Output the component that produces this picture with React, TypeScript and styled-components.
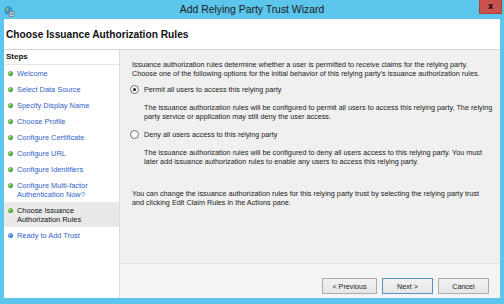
import React from "react";
import styled, { createGlobalStyle } from "styled-components";

const GlobalStyle = createGlobalStyle`
  html, body { margin: 0; padding: 0; }
  body {
    background: #5cc5ec;
    font-family: "Liberation Sans", Arial, sans-serif;
    overflow: hidden;
  }
`;

const Window = styled.div`
  width: 504px;
  height: 304px;
  display: flex;
  flex-direction: column;
  background: #5cc5ec;
`;

const TitleBar = styled.div`
  height: 19px;
  display: grid;
  grid-template-columns: 40px 1fr 40px;
  align-items: start;
`;

const AppIcon = styled.div`
  width: 11px;
  height: 11px;
  margin: 3px 0 0 4px;
`;

const TitleText = styled.div`
  text-align: center;
  font-size: 10.4px;
  line-height: 19px;
  color: #1b1b1b;
`;

const CloseButton = styled.div`
  justify-self: end;
  width: 21px;
  height: 13px;
  margin-right: 2px;
  background: #c9524e;
  border: 1px solid #a8403c;
  border-top: none;
  display: flex;
  align-items: center;
  justify-content: center;
  color: #1a0a0a;
  font-size: 8px;
  font-weight: bold;
  font-family: "DejaVu Sans", sans-serif;
`;

const Client = styled.div`
  flex: 1;
  margin: 0 4px 6px 4px;
  background: #ffffff;
  display: flex;
  flex-direction: column;
`;

const Header = styled.div`
  height: 30px;
  border-bottom: 1px solid #d6d6d6;
  display: flex;
  align-items: center;
  padding-left: 2px;
  font-weight: bold;
  font-size: 10.2px;
  color: #111;
`;

const Body = styled.div`
  flex: 1;
  display: flex;
`;

const Sidebar = styled.div`
  width: 115px;
  border-right: 1px solid #dcdcdc;
  background: #fff;
  display: flex;
  flex-direction: column;
`;

const StepsHeader = styled.div`
  height: 14px;
  border-bottom: 1px solid #e6e6e6;
  font-weight: bold;
  font-size: 8px;
  line-height: 13px;
  padding-left: 2px;
  color: #111;
`;

const StepItem = styled.div<{ $current?: boolean }>`
  display: flex;
  align-items: flex-start;
  padding: 3.5px 0 3.5px 4px;
  background: ${(p) => (p.$current ? "#e9e9e9" : "transparent")};
  color: ${(p) => (p.$current ? "#111" : "#2f62c8")};
  font-size: 7.4px;
  line-height: 9px;
  white-space: nowrap;
`;

const Dot = styled.span<{ $color: "green" | "blue" }>`
  width: 5px;
  height: 5px;
  border-radius: 50%;
  margin: 2px 4px 0 0;
  flex: none;
  background: ${(p) =>
    p.$color === "green"
      ? "radial-gradient(circle at 35% 35%, #9be07a, #3a9a2a 70%)"
      : "radial-gradient(circle at 35% 35%, #8cc4ff, #2a6fd6 70%)"};
`;

const Main = styled.div`
  flex: 1;
  display: flex;
  flex-direction: column;
`;

const Content = styled.div`
  flex: 1;
  background: #f0f0f0;
  padding: 9.5px 4px 0 12px;
  font-size: 7.25px;
  line-height: 9px;
  color: #1a1a1a;
  white-space: nowrap;
  overflow: hidden;
`;

const Paragraph = styled.p<{ $top?: number }>`
  margin: ${(p) => p.$top ?? 0}px 0 0 0;
`;

const RadioRow = styled.label<{ $top: number }>`
  display: flex;
  align-items: center;
  margin-top: ${(p) => p.$top}px;
  height: 9px;
`;

const RadioCircle = styled.span<{ $checked?: boolean }>`
  width: 7px;
  height: 7px;
  border-radius: 50%;
  border: 1px solid #6f6f6f;
  background: #fff;
  margin: 0 5px 0 -2px;
  display: flex;
  align-items: center;
  justify-content: center;
  &::after {
    content: "";
    width: 3px;
    height: 3px;
    border-radius: 50%;
    background: ${(p) => (p.$checked ? "#1a1a1a" : "transparent")};
  }
`;

const Description = styled.p`
  margin: 9px 0 0 12px;
`;

const ButtonBar = styled.div`
  height: 35px;
  border-top: 1px solid #e2e2e2;
  background: #f4f4f4;
  display: flex;
  justify-content: flex-end;
  align-items: flex-start;
  gap: 5px;
  padding: 14px 11px 0 0;
  box-sizing: border-box;
`;

const Button = styled.button<{ $w: number; $default?: boolean }>`
  width: ${(p) => p.$w}px;
  height: 16px;
  padding: 0;
  font-family: "Liberation Sans", Arial, sans-serif;
  font-size: 7.2px;
  color: #222;
  border: 1px solid ${(p) => (p.$default ? "#5a8fc8" : "#acacac")};
  background: linear-gradient(#f2f2f2, #e6e6e6);
  border-radius: 0;
`;

const steps: { label: React.ReactNode; current?: boolean; pending?: boolean }[] = [
  { label: "Welcome" },
  { label: "Select Data Source" },
  { label: "Specify Display Name" },
  { label: "Choose Profile" },
  { label: "Configure Certificate" },
  { label: "Configure URL" },
  { label: "Configure Identifiers" },
  { label: <>Configure Multi-factor<br />Authentication Now?</> },
  { label: <>Choose Issuance<br />Authorization Rules</>, current: true },
  { label: "Ready to Add Trust", pending: true },
];

const Icon = () => (
  <svg width="11" height="11" viewBox="0 0 11 11">
    <circle cx="4.5" cy="4.5" r="4" fill="#3f8fd6" />
    <path d="M2 2.5 Q3.5 1.5 4.5 3 L3.8 5 L2.2 4.6 Z" fill="#8bc94a" />
    <path d="M5.5 5 L7.5 4.5 L8 6.5 L6 7.5 Z" fill="#8bc94a" />
    <rect x="5.5" y="5.5" width="4.5" height="5" fill="#d9d9d9" stroke="#6b6b6b" strokeWidth="0.6" />
    <rect x="6.3" y="6.6" width="3" height="0.8" fill="#4a7cc0" />
    <rect x="6.3" y="8.2" width="3" height="0.8" fill="#4a7cc0" />
  </svg>
);

export default function App() {
  return (
    <>
      <GlobalStyle />
      <Window>
        <TitleBar>
          <AppIcon>
            <Icon />
          </AppIcon>
          <TitleText>Add Relying Party Trust Wizard</TitleText>
          <CloseButton>x</CloseButton>
        </TitleBar>
        <Client>
          <Header>Choose Issuance Authorization Rules</Header>
          <Body>
            <Sidebar>
              <StepsHeader>Steps</StepsHeader>
              {steps.map((s, i) => (
                <StepItem key={i} $current={s.current}>
                  <Dot $color={s.pending ? "blue" : "green"} />
                  <span>{s.label}</span>
                </StepItem>
              ))}
            </Sidebar>
            <Main>
              <Content>
                <Paragraph>
                  Issuance authorization rules determine whether a user is permitted to receive claims for the relying party.
                  <br />
                  Choose one of the following options for the initial behavior of this relying party's issuance authorization rules.
                </Paragraph>
                <RadioRow $top={7}>
                  <RadioCircle $checked />
                  Permit all users to access this relying party
                </RadioRow>
                <Description>
                  The issuance authorization rules will be configured to permit all users to access this relying party. The relying
                  <br />
                  party service or application may still deny the user access.
                </Description>
                <RadioRow $top={9}>
                  <RadioCircle />
                  Deny all users access to this relying party
                </RadioRow>
                <Description>
                  The issuance authorization rules will be configured to deny all users access to this relying party. You must
                  <br />
                  later add issuance authorization rules to enable any users to access this relying party.
                </Description>
                <Paragraph $top={23}>
                  You can change the issuance authorization rules for this relying party trust by selecting the relying party trust
                  <br />
                  and clicking Edit Claim Rules in the Actions pane.
                </Paragraph>
              </Content>
              <ButtonBar>
                <Button $w={55}>&lt; Previous</Button>
                <Button $w={51} $default>Next &gt;</Button>
                <Button $w={51}>Cancel</Button>
              </ButtonBar>
            </Main>
          </Body>
        </Client>
      </Window>
    </>
  );
}
